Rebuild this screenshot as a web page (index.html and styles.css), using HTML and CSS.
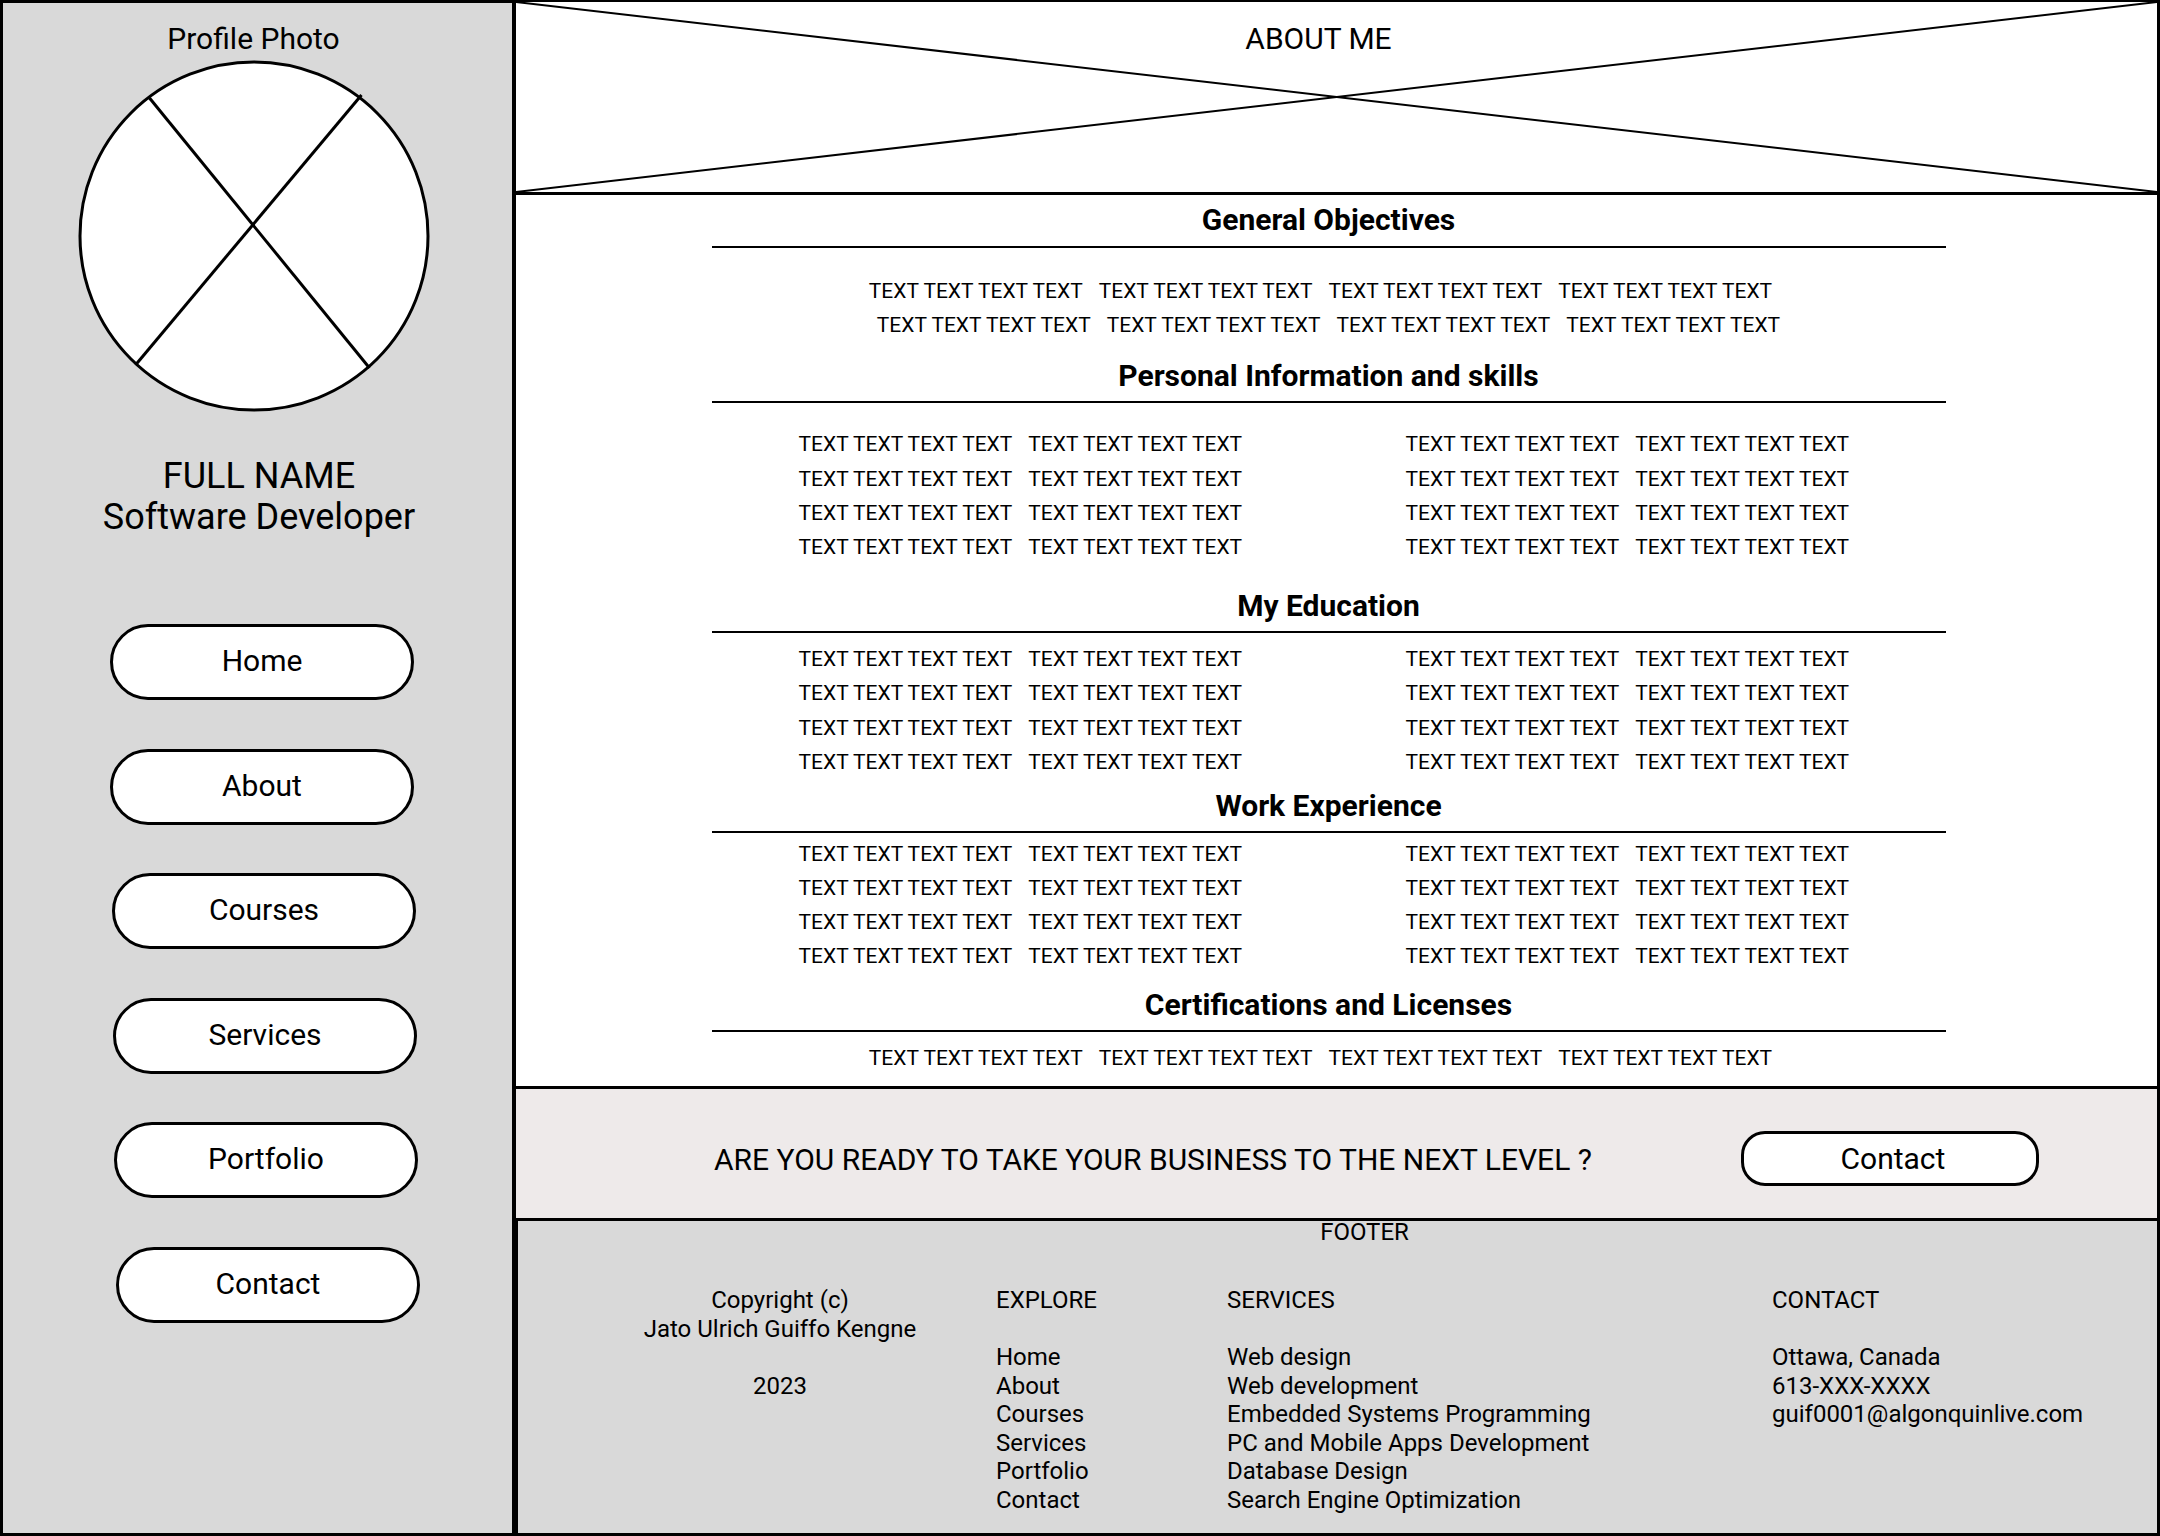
FILE: index.html
```html
<!DOCTYPE html>
<html lang="en">
<head>
<meta charset="utf-8">
<title>About Me - Wireframe</title>
<link rel="stylesheet" href="styles.css">
</head>
<body>
<div class="page">
  <aside class="sidebar">
    <div class="photo-label">Profile Photo</div>
    <svg class="photo" viewBox="0 0 360 360" width="360" height="360" aria-hidden="true">
      <circle cx="180" cy="180" r="174" fill="#fff" stroke="#000" stroke-width="3"/>
      <line x1="75.5" y1="42" x2="295.5" y2="312" stroke="#000" stroke-width="3"/>
      <line x1="287.5" y1="39" x2="61.5" y2="309" stroke="#000" stroke-width="3"/>
    </svg>
    <div class="identity">
      <div>FULL NAME</div>
      <div>Software Developer</div>
    </div>
    <nav class="nav">
      <a class="nav-btn">Home</a>
      <a class="nav-btn">About</a>
      <a class="nav-btn">Courses</a>
      <a class="nav-btn">Services</a>
      <a class="nav-btn">Portfolio</a>
      <a class="nav-btn">Contact</a>
    </nav>
  </aside>

  <main class="main">
    <header class="hero">
      <svg class="hero-x" viewBox="0 0 100 100" preserveAspectRatio="none" aria-hidden="true">
        <line x1="0" y1="0" x2="100" y2="100" stroke="#000" stroke-width="2" vector-effect="non-scaling-stroke"/>
        <line x1="0" y1="100" x2="100" y2="0" stroke="#000" stroke-width="2" vector-effect="non-scaling-stroke"/>
      </svg>
      <h1 class="hero-title">ABOUT ME</h1>
    </header>

    <section class="about">
      <div class="block block--objectives">
        <h2 class="block-title">General Objectives</h2>
        <div class="rule"></div>
        <div class="lines lines--first">
          <div class="line line--shift"><span>TEXT TEXT TEXT TEXT</span><span>TEXT TEXT TEXT TEXT</span><span>TEXT TEXT TEXT TEXT</span><span>TEXT TEXT TEXT TEXT</span></div>
          <div class="line"><span>TEXT TEXT TEXT TEXT</span><span>TEXT TEXT TEXT TEXT</span><span>TEXT TEXT TEXT TEXT</span><span>TEXT TEXT TEXT TEXT</span></div>
        </div>
      </div>

      <div class="block block--personal">
        <h2 class="block-title">Personal Information and skills</h2>
        <div class="rule"></div>
        <div class="pairs pairs--personal">
          <div class="pair"><span>TEXT TEXT TEXT TEXT</span><span>TEXT TEXT TEXT TEXT</span></div>
          <div class="pair"><span>TEXT TEXT TEXT TEXT</span><span>TEXT TEXT TEXT TEXT</span></div>
          <div class="pair"><span>TEXT TEXT TEXT TEXT</span><span>TEXT TEXT TEXT TEXT</span></div>
          <div class="pair"><span>TEXT TEXT TEXT TEXT</span><span>TEXT TEXT TEXT TEXT</span></div>
          <div class="pair"><span>TEXT TEXT TEXT TEXT</span><span>TEXT TEXT TEXT TEXT</span></div>
          <div class="pair"><span>TEXT TEXT TEXT TEXT</span><span>TEXT TEXT TEXT TEXT</span></div>
          <div class="pair"><span>TEXT TEXT TEXT TEXT</span><span>TEXT TEXT TEXT TEXT</span></div>
          <div class="pair"><span>TEXT TEXT TEXT TEXT</span><span>TEXT TEXT TEXT TEXT</span></div>
        </div>
      </div>

      <div class="block block--education">
        <h2 class="block-title">My Education</h2>
        <div class="rule"></div>
        <div class="pairs pairs--education">
          <div class="pair"><span>TEXT TEXT TEXT TEXT</span><span>TEXT TEXT TEXT TEXT</span></div>
          <div class="pair"><span>TEXT TEXT TEXT TEXT</span><span>TEXT TEXT TEXT TEXT</span></div>
          <div class="pair"><span>TEXT TEXT TEXT TEXT</span><span>TEXT TEXT TEXT TEXT</span></div>
          <div class="pair"><span>TEXT TEXT TEXT TEXT</span><span>TEXT TEXT TEXT TEXT</span></div>
          <div class="pair"><span>TEXT TEXT TEXT TEXT</span><span>TEXT TEXT TEXT TEXT</span></div>
          <div class="pair"><span>TEXT TEXT TEXT TEXT</span><span>TEXT TEXT TEXT TEXT</span></div>
          <div class="pair"><span>TEXT TEXT TEXT TEXT</span><span>TEXT TEXT TEXT TEXT</span></div>
          <div class="pair"><span>TEXT TEXT TEXT TEXT</span><span>TEXT TEXT TEXT TEXT</span></div>
        </div>
      </div>

      <div class="block block--work">
        <h2 class="block-title">Work Experience</h2>
        <div class="rule"></div>
        <div class="pairs pairs--work">
          <div class="pair"><span>TEXT TEXT TEXT TEXT</span><span>TEXT TEXT TEXT TEXT</span></div>
          <div class="pair"><span>TEXT TEXT TEXT TEXT</span><span>TEXT TEXT TEXT TEXT</span></div>
          <div class="pair"><span>TEXT TEXT TEXT TEXT</span><span>TEXT TEXT TEXT TEXT</span></div>
          <div class="pair"><span>TEXT TEXT TEXT TEXT</span><span>TEXT TEXT TEXT TEXT</span></div>
          <div class="pair"><span>TEXT TEXT TEXT TEXT</span><span>TEXT TEXT TEXT TEXT</span></div>
          <div class="pair"><span>TEXT TEXT TEXT TEXT</span><span>TEXT TEXT TEXT TEXT</span></div>
          <div class="pair"><span>TEXT TEXT TEXT TEXT</span><span>TEXT TEXT TEXT TEXT</span></div>
          <div class="pair"><span>TEXT TEXT TEXT TEXT</span><span>TEXT TEXT TEXT TEXT</span></div>
        </div>
      </div>

      <div class="block block--certs">
        <h2 class="block-title">Certifications and Licenses</h2>
        <div class="rule"></div>
        <div class="lines lines--certs">
          <div class="line line--shift"><span>TEXT TEXT TEXT TEXT</span><span>TEXT TEXT TEXT TEXT</span><span>TEXT TEXT TEXT TEXT</span><span>TEXT TEXT TEXT TEXT</span></div>
        </div>
      </div>
    </section>

    <section class="cta">
      <p class="cta-text">ARE YOU READY TO TAKE YOUR BUSINESS TO THE NEXT LEVEL ?</p>
      <a class="cta-btn">Contact</a>
    </section>

    <footer class="footer">
      <div class="footer-title">FOOTER</div>
      <div class="footer-cols">
        <div class="fcol fcol--copy">
          <div>Copyright (c)</div>
          <div>Jato Ulrich Guiffo Kengne</div>
          <div class="blank">&nbsp;</div>
          <div>2023</div>
        </div>
        <div class="fcol">
          <div>EXPLORE</div>
          <div class="blank">&nbsp;</div>
          <div>Home</div>
          <div>About</div>
          <div>Courses</div>
          <div>Services</div>
          <div>Portfolio</div>
          <div>Contact</div>
        </div>
        <div class="fcol">
          <div>SERVICES</div>
          <div class="blank">&nbsp;</div>
          <div>Web design</div>
          <div>Web development</div>
          <div>Embedded Systems Programming</div>
          <div>PC and Mobile Apps Development</div>
          <div>Database Design</div>
          <div>Search Engine Optimization</div>
        </div>
        <div class="fcol">
          <div>CONTACT</div>
          <div class="blank">&nbsp;</div>
          <div>Ottawa, Canada</div>
          <div>613-XXX-XXXX</div>
          <div>guif0001@algonquinlive.com</div>
        </div>
      </div>
    </footer>
  </main>
</div>
</body>
</html>
```

FILE: styles.css
```css
* {
  box-sizing: border-box;
}

html, body {
  margin: 0;
  padding: 0;
}

body {
  font-family: Roboto, "Liberation Sans", Arial, sans-serif;
  color: #000;
  background: #fff;
}

.page {
  display: flex;
  width: 2160px;
  height: 1536px;
}

/* ---------- Sidebar ---------- */
.sidebar {
  width: 512px;
  height: 1536px;
  flex: none;
  background: #d9d9d9;
  border: 3px solid #000;
  border-right: 0;
  display: flex;
  flex-direction: column;
  align-items: center;
  padding: 19px 8px 0 0;
}

.photo-label {
  font-size: 30px;
  line-height: 34px;
}

.photo {
  display: block;
  width: 360px;
  height: 360px;
}

.identity {
  margin-top: 40px;
  margin-left: 11px;
  font-size: 36px;
  line-height: 41px;
  text-align: center;
}

.nav {
  align-self: stretch;
  margin-top: 86px;
  padding-left: 107px;
  display: flex;
  flex-direction: column;
  align-items: flex-start;
  gap: 48.6px;
}

.nav-btn {
  display: flex;
  align-items: center;
  justify-content: center;
  width: 304px;
  height: 76px;
  padding-bottom: 3px;
  background: #fff;
  border: 3px solid #000;
  border-radius: 38px;
  font-size: 30px;
  color: #000;
  text-decoration: none;
}

.nav-btn:nth-child(3) { margin-left: 2px; }
.nav-btn:nth-child(4) { margin-left: 3px; }
.nav-btn:nth-child(5) { margin-left: 4px; }
.nav-btn:nth-child(6) { margin-left: 6px; }

/* ---------- Main ---------- */
.main {
  width: 1648px;
  height: 1536px;
  flex: none;
  border-left: 4px solid #000;
  border-right: 3px solid #000;
  border-top: 2px solid #000;
  border-bottom: 3px solid #000;
  display: flex;
  flex-direction: column;
}

.hero {
  position: relative;
  height: 193px;
  flex: none;
  border-bottom: 3px solid #000;
  background: #fff;
  padding: 19px 36px 0 0;
}

.hero-x {
  position: absolute;
  inset: 0;
  width: 100%;
  height: 100%;
}

.hero-title {
  position: relative;
  margin: 0;
  font-size: 30px;
  font-weight: 400;
  line-height: 36px;
  text-align: center;
}

/* ---------- About content ---------- */
.about {
  height: 891px;
  flex: none;
  padding: 7px 16px 0 0;
  background: #fff;
}

.block-title {
  margin: 0;
  font-size: 30px;
  font-weight: 700;
  line-height: 36px;
  text-align: center;
}

.rule {
  width: 1234px;
  height: 2px;
  margin: 8px auto 0;
  background: #000;
}

.block--personal { margin-top: 16px; }
.block--education { margin-top: 24px; }
.block--work { margin-top: 8.5px; }
.block--certs { margin-top: 13.5px; }

.block--personal .rule,
.block--education .rule,
.block--work .rule,
.block--certs .rule {
  margin-top: 7px;
}

.lines,
.pairs {
  font-size: 21px;
  line-height: 34.2px;
}

.lines--first { margin-top: 26px; }
.lines--certs { margin-top: 9px; }

.line {
  display: flex;
  justify-content: center;
  gap: 16px;
  white-space: nowrap;
}

.line--shift {
  padding-right: 16px;
}

.pairs {
  width: 1234px;
  margin: 0 auto;
  padding-left: 87px;
  display: grid;
  grid-template-columns: 443px 443px;
  column-gap: 164px;
}

.pairs--personal { margin-top: 24px; }
.pairs--education { margin-top: 9px; }
.pairs--work { margin-top: 4px; }

.pair {
  display: flex;
  gap: 16px;
  white-space: nowrap;
}

/* ---------- Call to action ---------- */
.cta {
  height: 132px;
  flex: none;
  border-top: 3px solid #000;
  background: #eeeaea;
  display: flex;
  align-items: center;
  padding: 10px 0 0 198px;
}

.cta-text {
  margin: 0;
  font-size: 30px;
  line-height: 34px;
  white-space: nowrap;
  padding-top: 3px;
}

.cta-btn {
  margin-left: 149px;
  width: 298px;
  height: 55px;
  padding-left: 6px;
  display: flex;
  align-items: center;
  justify-content: center;
  background: #fff;
  border: 3px solid #000;
  border-radius: 24px;
  font-size: 30px;
  color: #000;
  text-decoration: none;
}

/* ---------- Footer ---------- */
.footer {
  flex: 1;
  border-top: 3px solid #000;
  border-left: 2px solid #000;
  background: #d9d9d9;
}

.footer-title {
  font-size: 24px;
  line-height: 22px;
  text-align: center;
  padding-left: 54px;
}

.footer-cols {
  margin-top: 43px;
  padding-left: 112px;
  display: grid;
  grid-template-columns: 366px 231px 545px auto;
  font-size: 24px;
  line-height: 28.5px;
}

.fcol--copy {
  padding-right: 66px;
  text-align: center;
}
```
